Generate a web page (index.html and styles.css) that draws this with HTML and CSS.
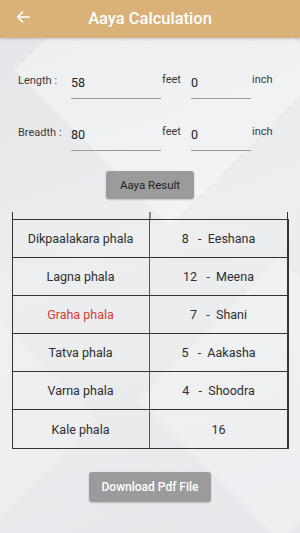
FILE: index.html
```html
<!DOCTYPE html>
<html>
<head>
<meta charset="utf-8">
<link rel="stylesheet" href="styles.css">
</head>
<body>
<div class="screen">
  <div class="bg-shape s1"></div>
  <div class="bg-shape s2"></div>
  <div class="bg-shape s3"></div>
  <header class="appbar">
    <svg class="back" width="14" height="12" viewBox="0 0 14 12"><path d="M13 6H2M6.5 1.2L1.6 6l4.9 4.8" fill="none" stroke="#fff" stroke-width="1.7" stroke-linecap="round" stroke-linejoin="round"/></svg>
    <div class="title">Aaya Calculation</div>
  </header>
  <main class="content">
    <div class="form-row">
      <span class="label">Length :</span>
      <span class="field wide">58</span>
      <span class="unit">feet</span>
      <span class="field narrow">0</span>
      <span class="unit">inch</span>
    </div>
    <div class="form-row">
      <span class="label">Breadth :</span>
      <span class="field wide">80</span>
      <span class="unit">feet</span>
      <span class="field narrow">0</span>
      <span class="unit">inch</span>
    </div>
    <div class="btn-wrap"><button class="btn btn-result">Aaya Result</button></div>
    <div class="table-wrap">
      <div class="table">
        <div class="cell">Dikpaalakara phala</div><div class="cell">8&nbsp;&nbsp;&nbsp;-&nbsp;&nbsp;Eeshana</div>
        <div class="cell">Lagna phala</div><div class="cell">12&nbsp;&nbsp;&nbsp;-&nbsp;&nbsp;Meena</div>
        <div class="cell red">Graha phala</div><div class="cell">7&nbsp;&nbsp;&nbsp;-&nbsp;&nbsp;Shani</div>
        <div class="cell">Tatva phala</div><div class="cell">5&nbsp;&nbsp;&nbsp;-&nbsp;&nbsp;Aakasha</div>
        <div class="cell">Varna phala</div><div class="cell">4&nbsp;&nbsp;&nbsp;-&nbsp;&nbsp;Shoodra</div>
        <div class="cell">Kale phala</div><div class="cell">16</div>
      </div>
    </div>
    <div class="btn-wrap"><button class="btn btn-pdf">Download Pdf File</button></div>
  </main>
</div>
</body>
</html>
```
FILE: styles.css
```css
* { box-sizing: border-box; }
html, body { margin: 0; padding: 0; }
body {
  font-family: Roboto, "Noto Sans", sans-serif;
  width: 300px;
  height: 533px;
  overflow: hidden;
}
.screen {
  position: relative;
  width: 300px;
  height: 533px;
  overflow: hidden;
  background: linear-gradient(160deg, #e3e5e8 0%, #eceef0 45%, #e6e8eb 100%);
}
.bg-shape {
  position: absolute;
  background: rgba(255,255,255,0.35);
  transform: rotate(45deg);
}
.s1 { width: 220px; height: 220px; left: 60px; top: -40px; }
.s2 { width: 200px; height: 200px; left: 180px; top: 300px; background: rgba(255,255,255,0.25); }
.s3 { width: 180px; height: 180px; left: -120px; top: 330px; background: rgba(255,255,255,0.2); }

.appbar {
  position: relative;
  z-index: 2;
  height: 38px;
  background: #d9b179;
  display: flex;
  align-items: center;
  box-shadow: 0 1px 3px rgba(0,0,0,0.18);
}
.back { position: absolute; left: 16px; top: 11px; }
.title {
  flex: 1;
  text-align: center;
  color: #fff;
  font-size: 16.5px;
  font-weight: 500;
  padding-bottom: 2px;
}
.content {
  position: relative;
  z-index: 1;
  padding-top: 29px;
}
.form-row {
  display: flex;
  align-items: flex-start;
  height: 32px;
  margin-bottom: 20px;
  color: #3a3a3a;
}
.label {
  width: 71px;
  padding-left: 18px;
  font-size: 11px;
  line-height: 28px;
}
.field {
  height: 32px;
  border-bottom: 1px solid #9a9a9a;
  font-size: 12.5px;
  color: #222;
  line-height: 31px;
  padding-left: 0;
}
.wide { width: 90px; }
.narrow { width: 60px; }
.unit {
  font-size: 11px;
  line-height: 26px;
  width: 30px;
  padding-left: 1px;
}
.btn-wrap { display: flex; justify-content: center; }
.btn {
  border: none;
  border-radius: 3px;
  background: #9b9b9b;
  font-family: Roboto, "Noto Sans", sans-serif;
  box-shadow: 0 1px 2px rgba(0,0,0,0.2);
}
.btn-result {
  width: 88px;
  height: 28px;
  font-size: 11.5px;
  color: #222;
  margin-top: 0;
}
.table-wrap {
  margin: 13px 12px 0 12px;
  padding-top: 7px;
  border-left: 1.5px solid #333;
  border-right: 1.5px solid #333;
  position: relative;
}
.table-wrap::before {
  content: "";
  position: absolute;
  left: 136px;
  top: 0;
  height: 7px;
  width: 2px;
  background: #888;
}
.table {
  display: grid;
  grid-template-columns: 137px 1fr;
  grid-auto-rows: 38px;
  border-top: 1.5px solid #333;
  border-bottom: 1.5px solid #333;
  margin: 0 -1.5px;
  border-left: 1.5px solid #333;
  border-right: 1.5px solid #333;
}
.cell {
  display: flex;
  align-items: center;
  justify-content: center;
  font-size: 12.5px;
  color: #2e2e2e;
  border-bottom: 1.5px solid #333;
  white-space: nowrap;
}
.cell:nth-child(odd) { border-right: 1.5px solid #555; }
.cell:nth-last-child(-n+2) { border-bottom: none; }
.red { color: #d63c35; }
.btn-pdf {
  margin-top: 23px;
  width: 122px;
  height: 30px;
  color: #fff;
  font-size: 12px;
  font-weight: 500;
}
```
